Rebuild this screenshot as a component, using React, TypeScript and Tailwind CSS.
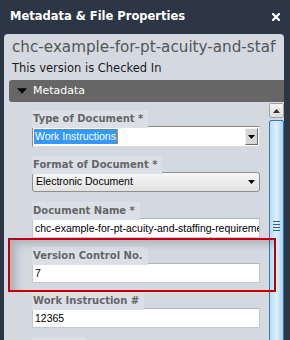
import React from 'react';

const Label: React.FC<{ text: string }> = ({ text }) => (
    <div className="h-[18px] leading-[18px]">
        <span className="inline-block bg-[#dce0e6] pl-[1px] pr-[5px] text-[10px] font-bold text-[#666666] [font-family:'DejaVu_Sans',sans-serif]">
            {text}
        </span>
    </div>
);

const TextInput: React.FC<{ value: string }> = ({ value }) => (
    <div className="h-[20px] w-[228px] overflow-hidden whitespace-nowrap border border-[#c4c7cc] border-t-[#b0b3b8] bg-white pl-[2px] text-[10.5px] leading-[18px] text-black [font-family:'Liberation_Sans',sans-serif]">
        {value}
    </div>
);

const ArrowDown: React.FC<{ className?: string }> = ({ className }) => (
    <svg viewBox="0 0 7 4" className={className}>
        <path d="M0 0h7L3.5 4z" fill="#000" />
    </svg>
);

const App: React.FC = () => {
    return (
        <div className="flex h-[340px] w-[290px] flex-col overflow-hidden bg-[#2d3644] [font-family:'DejaVu_Sans',sans-serif]">
            {/* Title bar */}
            <div className="flex h-[34px] shrink-0 items-center justify-between pl-[10px] pr-[10px]">
                <span className="text-[11.5px] font-bold text-white">Metadata &amp; File Properties</span>
                <svg viewBox="0 0 8 8" className="h-[8px] w-[8px]">
                    <path d="M1 1l6 6M7 1l-6 6" stroke="#fff" strokeWidth="2.2" strokeLinecap="square" />
                </svg>
            </div>

            {/* Panel */}
            <div className="ml-[4px] mr-[6px] flex flex-1 flex-col rounded-t-[4px] bg-[#d4d9e1]">
                <div className="pl-[8px] pr-[8px] pt-[3px]">
                    <div className="h-[21px] overflow-hidden whitespace-nowrap text-[15.2px] leading-[21px] text-[#555555]">
                        chc-example-for-pt-acuity-and-staffing-requirements
                    </div>
                    <div className="h-[22px] text-[11.5px] leading-[20px] text-[#1a1a1a]">This version is Checked In</div>
                </div>

                {/* Section header */}
                <div className="ml-[5px] flex h-[22px] shrink-0 items-center gap-[6px] rounded-l-[3px] bg-[#666666] pl-[8px]">
                    <ArrowDown className="h-[6px] w-[10px]" />
                    <span className="text-[11px] text-white">Metadata</span>
                </div>

                {/* Body */}
                <div className="ml-[5px] mt-[1px] flex flex-1">
                    <div className="flex-1 pl-[23px] pt-[5px]">
                        {/* Type of Document */}
                        <Label text="Type of Document *" />
                        <div className="mb-[7px] flex h-[21px] w-[228px] items-center border border-[#8c8c8c] border-b-[#dcdcdc] border-r-[#dcdcdc] bg-white pl-[1px] pr-[1px]">
                            <div className="flex flex-1 items-center">
                                <span className="bg-[#3399ff] px-[1px] text-[10.5px] leading-[15px] text-white [font-family:'Liberation_Sans',sans-serif]">
                                    Work Instructions
                                </span>
                                <span className="h-[15px] w-[1px] bg-[#ff7a00]" />
                            </div>
                            <div className="flex h-[17px] w-[13px] items-center justify-center border border-[#f4f4f4] border-b-[#6e6e6e] border-r-[#6e6e6e] bg-[#d6d6d6]">
                                <ArrowDown className="h-[4px] w-[7px]" />
                            </div>
                        </div>

                        {/* Format of Document */}
                        <Label text="Format of Document *" />
                        <div className="mb-[8px] flex h-[20px] w-[228px] items-center justify-between rounded-[3px] border border-[#8e8f8f] bg-gradient-to-b from-[#f7f7f7] to-[#e2e2e2] pl-[3px] pr-[4px]">
                            <span className="text-[10.5px] text-black [font-family:'Liberation_Sans',sans-serif]">Electronic Document</span>
                            <ArrowDown className="h-[4px] w-[7px]" />
                        </div>

                        {/* Document Name */}
                        <Label text="Document Name *" />
                        <div className="mb-[7px]">
                            <TextInput value="chc-example-for-pt-acuity-and-staffing-requirements" />
                        </div>

                        {/* Version Control No. (highlighted) */}
                        <div className="relative mb-[7px]">
                            <div className="pointer-events-none absolute -bottom-[9px] -left-[24px] -right-[7px] -top-[7px] border-2 border-[#c00000] shadow-[inset_10px_8px_9px_-4px_rgba(0,0,0,0.18)]" />
                            <Label text="Version Control No." />
                            <TextInput value="7" />
                        </div>

                        {/* Work Instruction # */}
                        <Label text="Work Instruction #" />
                        <div className="mb-[7px]">
                            <TextInput value="12365" />
                        </div>

                        <Label text="Location" />
                        <TextInput value="" />
                    </div>

                    {/* Scrollbar */}
                    <div className="flex w-[15px] shrink-0 flex-col gap-[2px]">
                        <div className="flex h-[15px] items-center justify-center rounded-[2px] border border-[#a3a3a3] bg-gradient-to-b from-[#f6f6f6] to-[#dcdcdc]">
                            <svg viewBox="0 0 7 4" className="h-[4px] w-[7px]">
                                <path d="M0 4h7L3.5 0z" fill="#333" />
                            </svg>
                        </div>
                        <div className="flex flex-1 flex-col items-center rounded-[2px] border border-[#3b79a8] bg-gradient-to-r from-[#b6dbf6] via-[#dcf0fd] to-[#a9d3f3] pt-[100px]">
                            <div className="flex flex-col gap-[2px]">
                                <div className="h-[1px] w-[7px] bg-[#2d6893]" />
                                <div className="h-[1px] w-[7px] bg-[#2d6893]" />
                                <div className="h-[1px] w-[7px] bg-[#2d6893]" />
                                <div className="h-[1px] w-[7px] bg-[#2d6893]" />
                            </div>
                        </div>
                    </div>
                </div>
            </div>
        </div>
    );
};

export default App;
